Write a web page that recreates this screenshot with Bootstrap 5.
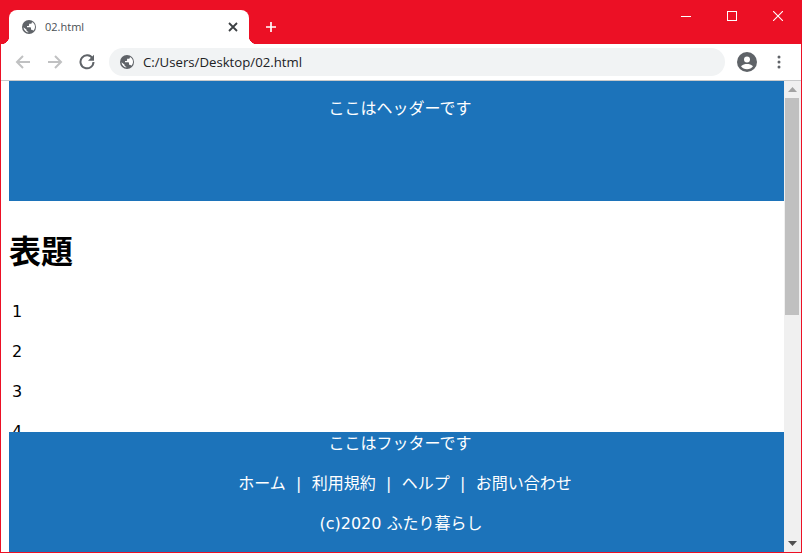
<!DOCTYPE html>
<html lang="ja">
<head>
<meta charset="utf-8">
<title>02.html</title>
<link href="https://cdn.jsdelivr.net/npm/bootstrap@5.3.0/dist/css/bootstrap.min.css" rel="stylesheet">
<style>
html,body{height:100%;overflow:hidden;margin:0}
body{font-family:"DejaVu Sans","Noto Sans CJK JP",sans-serif;font-size:16px;color:#000;background:#fff}
.win-frame{height:553px;width:802px;border:1px solid #ec1025;overflow:hidden}
.tab-strip{height:43px;background:#ec1025;flex:none}
.tab-shape{position:relative;width:240px;height:34px;margin:9px 0 0 8px;background:#fff;border-radius:8px 8px 0 0;padding-left:13px;font:11px/36px "Open Sans","Liberation Sans",sans-serif;color:#4a4f55}
.tab-shape::before,.tab-shape::after{content:"";position:absolute;bottom:0;width:8px;height:8px;background:#fff}
.tab-shape::before{left:-8px;-webkit-mask:radial-gradient(circle at 0 0,transparent 8px,#000 8.5px);mask:radial-gradient(circle at 0 0,transparent 8px,#000 8.5px)}
.tab-shape::after{right:-8px;-webkit-mask:radial-gradient(circle at 100% 0,transparent 8px,#000 8.5px);mask:radial-gradient(circle at 100% 0,transparent 8px,#000 8.5px)}
.tab-label{margin-left:9px;flex:1}
.tab-close{margin-right:11px}
.plus-slot{margin:9px 0 0 17px;width:10px;height:34px}
.win-ctl{width:46px;height:30px}
.tool-bar{height:37px;flex:none;background:#fff;border-bottom:1px solid #c9cacb;padding:0 0 1px 6px}
.tool-btn{width:32px;height:32px}
.omni-box{width:616px;height:28px;margin-left:6px;margin-right:6px;border-radius:14px;background:#f1f3f4;padding-left:11px;font:13.2px/28px "Open Sans","Liberation Sans",sans-serif;color:#202124}
.omni-text{margin-left:9px}
.view-port{flex:1;min-height:0}
.page-col{width:783px;padding-left:8px;min-width:0}
.head-band{height:120px;flex:none;background:#1c73ba;color:#fff;padding:16px 0 0 7px;line-height:24px}
.page-main{flex:1;min-height:0;overflow:hidden}
.page-main h1{font-size:32px;font-weight:700;line-height:48px;margin:24px 0 27px;font-family:"Noto Sans CJK JP",sans-serif}
.page-main p{margin:0 0 16px;padding-left:3px;line-height:24px}
.foot-band{height:120px;flex:none;background:#1c73ba;color:#fff;line-height:24px;padding-left:7px}
.foot-band p{margin:0 0 16px}
.foot-nav{padding-left:10px}
.foot-nav a{color:#fff;text-decoration:none}
.foot-sep{width:26px;text-align:center;display:inline-block}
.foot-copy{padding-left:2px}
.scroll-rail{width:17px;background:#f0f0f0;flex:none;padding:0 2px 0 1px}
.scroll-arrow{height:17px}
.scroll-thumb{height:217px;background:#c0c0c0;width:14px}
</style>
</head>
<body>
<div class="win-frame d-flex flex-column">
  <div class="tab-strip d-flex">
    <div class="tab-shape d-flex align-items-center">
      <svg width="14" height="14" viewBox="0 0 14 14"><circle cx="7" cy="7" r="7" fill="#5f6368"/><path d="M6.300 12.500C3.900 12.100 1.600 10 1.500 7.200L4.600 9.800V10.600C4.600 11.400 5.500 11.600 6.300 11.800ZM11.100 10.700C10.900 10.100 10.300 9.700 9.700 9.700H9V8c0-.4-.3-.7-.7-.7H5V5.900h1.400c.4 0 .7-.3.7-.7V3.800h1.400c.8 0 1.400-.6 1.400-1.400v-.3c2 .8 3.100 2.700 3.100 4.900 0 1.400-.7 2.800-1.800 3.700Z" fill="#fff"/></svg>
      <span class="tab-label">02.html</span>
      <svg class="tab-close" width="10" height="10" viewBox="0 0 10 10"><path d="M1 1L9 9M9 1L1 9" stroke="#3c4043" stroke-width="1.800"/></svg>
    </div>
    <div class="plus-slot d-flex align-items-center">
      <svg width="12" height="12" viewBox="0 0 12 12"><path d="M6 0V12M0 6H12" stroke="#fff" stroke-width="2"/></svg>
    </div>
    <div class="d-flex ms-auto">
      <div class="win-ctl d-flex justify-content-center align-items-center"><svg width="10" height="10" viewBox="0 0 10 10"><path d="M0 5.500H10" stroke="#fff"/></svg></div>
      <div class="win-ctl d-flex justify-content-center align-items-center"><svg width="10" height="10" viewBox="0 0 10 10"><rect x=".5" y=".5" width="9" height="9" fill="none" stroke="#fff"/></svg></div>
      <div class="win-ctl d-flex justify-content-center align-items-center"><svg width="10" height="10" viewBox="0 0 10 10"><path d="M0 0L10 10M10 0L0 10" stroke="#fff" stroke-width="1.100"/></svg></div>
    </div>
  </div>
  <div class="tool-bar d-flex align-items-center">
    <div class="tool-btn d-flex justify-content-center align-items-center"><svg width="16" height="16" viewBox="0 0 16 16"><path d="M15 8H2M8 2L2 8L8 14" fill="none" stroke="#c0c1c2" stroke-width="2"/></svg></div>
    <div class="tool-btn d-flex justify-content-center align-items-center"><svg width="16" height="16" viewBox="0 0 16 16"><path d="M1 8H14M8 2L14 8L8 14" fill="none" stroke="#c0c1c2" stroke-width="2"/></svg></div>
    <div class="tool-btn d-flex justify-content-center align-items-center"><svg width="16" height="16" viewBox="0 0 16 16"><path d="M13.600 4.500A6.500 6.500 0 1 0 14.500 8" fill="none" stroke="#5f6368" stroke-width="2"/><path d="M15 0.800V6.800H9Z" fill="#5f6368"/></svg></div>
    <div class="omni-box d-flex align-items-center">
      <svg width="14" height="14" viewBox="0 0 14 14"><circle cx="7" cy="7" r="7" fill="#5f6368"/><path d="M6.300 12.500C3.900 12.100 1.600 10 1.500 7.200L4.600 9.800V10.600C4.600 11.400 5.500 11.600 6.300 11.800ZM11.100 10.700C10.900 10.100 10.300 9.700 9.700 9.700H9V8c0-.4-.3-.7-.7-.7H5V5.900h1.400c.4 0 .7-.3.7-.7V3.800h1.400c.8 0 1.400-.6 1.400-1.400v-.3c2 .8 3.100 2.700 3.100 4.900 0 1.400-.7 2.800-1.800 3.700Z" fill="#fff"/></svg>
      <span class="omni-text">C:/Users/Desktop/02.html</span>
    </div>
    <div class="tool-btn d-flex justify-content-center align-items-center"><svg width="20" height="20" viewBox="0 0 20 20"><circle cx="10" cy="10" r="10" fill="#5f6368"/><circle cx="10" cy="7.500" r="3" fill="#fff"/><path d="M4 14.300C5.500 12.500 8 12 10 12s4.500.5 6 2.300C14.700 16.200 12.500 17.200 10 17.200S5.300 16.200 4 14.300Z" fill="#fff"/></svg></div>
    <div class="tool-btn d-flex justify-content-center align-items-center"><svg width="4" height="14" viewBox="0 0 4 14"><circle cx="2" cy="2" r="1.500" fill="#5f6368"/><circle cx="2" cy="7" r="1.500" fill="#5f6368"/><circle cx="2" cy="12" r="1.500" fill="#5f6368"/></svg></div>
  </div>
  <div class="view-port d-flex">
    <div class="page-col d-flex flex-column">
      <header class="head-band text-center">ここはヘッダーです</header>
      <main class="page-main">
        <h1>表題</h1>
        <p>1</p><p>2</p><p>3</p><p>4</p><p>5</p>
      </main>
      <footer class="foot-band text-center">
        <p>ここはフッターです</p>
        <p class="foot-nav"><a href="#">ホーム</a><span class="foot-sep">|</span><a href="#">利用規約</a><span class="foot-sep">|</span><a href="#">ヘルプ</a><span class="foot-sep">|</span><a href="#">お問い合わせ</a></p>
        <p class="foot-copy">(c)2020 ふたり暮らし</p>
      </footer>
    </div>
    <div class="scroll-rail d-flex flex-column">
      <div class="scroll-arrow d-flex justify-content-center align-items-center"><svg width="9" height="5" viewBox="0 0 9 5"><path d="M4.500 0L9 5H0Z" fill="#a3a3a3"/></svg></div>
      <div class="scroll-thumb"></div>
      <div class="scroll-arrow d-flex justify-content-center align-items-center mt-auto"><svg width="9" height="5" viewBox="0 0 9 5"><path d="M0 0H9L4.500 5Z" fill="#505050"/></svg></div>
    </div>
  </div>
</div>
<script src="https://cdn.jsdelivr.net/npm/bootstrap@5.3.0/dist/js/bootstrap.bundle.min.js"></script>
</body>
</html>
